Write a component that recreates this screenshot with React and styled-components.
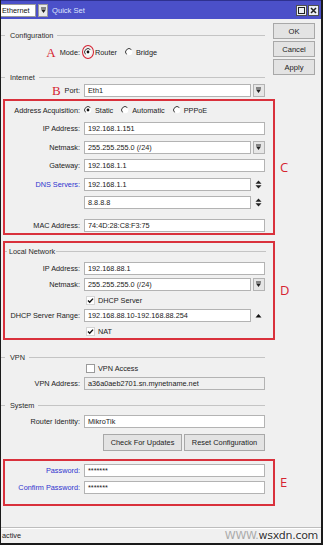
import React from 'react';
import styled, { createGlobalStyle } from 'styled-components';

const GlobalStyle = createGlobalStyle`
    html, body {
        margin: 0;
        padding: 0;
        background: #fff;
    }
`

const Window = styled.div`
    position: relative;
    width: 323px;
    height: 545px;
    box-sizing: border-box;
    border-left: 1px solid #1a1a1a;
    border-right: 2px solid #1a1a1a;
    border-bottom: 2px solid #1a1a1a;
    background: #f0f0f0;
    display: flex;
    flex-direction: column;
    font-family: "Liberation Sans", Arial, sans-serif;
    font-size: 7.3px;
    color: #222;
    overflow: hidden;
`

const TitleBar = styled.div`
    height: 19px;
    box-sizing: border-box;
    border-top: 1px solid #2e3190;
    background: #4b50c9;
    display: flex;
    align-items: center;
    flex: none;
`

const ModeSelect = styled.div`
    width: 36px;
    height: 13px;
    background: #fff;
    border: 1px solid #9a9a9a;
    box-sizing: border-box;
    line-height: 11px;
    padding-left: 1px;
    margin-left: -1px;
    color: #111;
`

const TitleDrop = styled.div`
    width: 10px;
    height: 13px;
    margin-left: 2px;
    box-sizing: border-box;
    background: #e9e9e9;
    border: 1px solid #9a9a9a;
    display: flex;
    align-items: center;
    justify-content: center;
`

const TitleText = styled.div`
    margin-left: 4px;
    color: #dce4ff;
    font-size: 7.6px;
    flex: 1;
`

const WinButtons = styled.div`
    display: flex;
    gap: 1px;
    margin-right: 2px;
`

const WinButton = styled.div`
    width: 11px;
    height: 11px;
    box-sizing: border-box;
    background: #eceff5;
    border: 1px solid #505050;
    display: flex;
    align-items: center;
    justify-content: center;
`

const Body = styled.div`
    flex: 1;
    display: flex;
    flex-direction: column;
    padding-top: 4px;
`

const SectionRow = styled.div`
    display: flex;
    align-items: ${p => p.$top ? 'flex-start' : 'center'};
    margin-top: ${p => p.$mt || 0}px;
`

const Main = styled.div`
    width: 271px;
    flex: none;
    display: flex;
    flex-direction: column;
`

const Aside = styled.div`
    flex: 1;
    display: flex;
    flex-direction: column;
    gap: 2px;
    padding-left: ${p => p.$pl ?? 1}px;
`

const Box = styled.div`
    width: 272px;
    margin-left: 2px;
    box-sizing: border-box;
    border: 2px solid #d9313c;
    flex: none;
    display: flex;
    flex-direction: column;
    padding: ${p => p.$pt || 0}px 0 ${p => p.$pb || 0}px;
`

const Marker = styled.div`
    color: #d62430;
    font-family: ${p => p.$serif ? '"Liberation Serif", serif' : '"Open Sans", "Liberation Sans", sans-serif'};
    font-size: ${p => p.$size || 13}px;
    line-height: 1;
    padding-left: 5px;
    margin-right: ${p => p.$mr || 0}px;
`

const SideButton = styled.div`
    width: 42px;
    height: 16px;
    box-sizing: border-box;
    background: #e3e3e3;
    border: 1px solid #a8a8a8;
    display: flex;
    align-items: center;
    justify-content: center;
    font-size: 7.6px;
    color: #222;
`

const GroupHeader = styled.div`
    display: flex;
    align-items: center;
    height: 10px;
    gap: ${p => p.$gap ?? 5}px;
    padding-right: 7px;
    margin-top: ${p => p.$mt || 0}px;
    color: #2a2a2a;
    &::before {
        content: "";
        width: ${p => p.$dash ?? 4}px;
        border-top: 1px solid #c4c4c4;
    }
    &::after {
        content: "";
        flex: 1;
        border-top: 1px solid #c4c4c4;
        margin-left: -1px;
    }
`

const Row = styled.div`
    display: flex;
    align-items: center;
    height: ${p => p.$h || 14}px;
    margin-top: ${p => p.$mt || 0}px;
    padding-right: ${p => p.$pr ?? 7}px;
`

const Label = styled.div`
    width: ${p => p.$w}px;
    flex: none;
    display: flex;
    justify-content: flex-end;
    align-items: center;
    margin-right: 4px;
    white-space: nowrap;
    color: ${p => p.$blue ? '#2f33cf' : '#222'};
`

const Input = styled.div`
    flex: 1;
    height: 13px;
    box-sizing: border-box;
    border: 1px solid #b3b3b3;
    background: ${p => p.$disabled ? '#f0f0f0' : '#fff'};
    padding-left: 3px;
    line-height: 11px;
    color: #1a1a1a;
    white-space: nowrap;
    overflow: hidden;
`

const Trail = styled.div`
    width: 13px;
    flex: none;
    margin-left: 1px;
    height: 13px;
    display: flex;
    align-items: center;
    justify-content: center;
`

const DropButton = styled.div`
    width: 12px;
    height: 13px;
    box-sizing: border-box;
    background: #e6e6e6;
    border: 1px solid #b3b3b3;
    display: flex;
    align-items: center;
    justify-content: center;
`

const Options = styled.div`
    display: flex;
    align-items: center;
    gap: 8px;
`

const Option = styled.div`
    position: relative;
    display: flex;
    align-items: center;
    gap: 3px;
    margin-left: ${p => p.$ml || 0}px;
    white-space: nowrap;
`

const Ring = styled.div`
    position: absolute;
    left: -2px;
    top: -3px;
    width: 12px;
    height: 14px;
    box-sizing: border-box;
    border: 1.5px solid #d42030;
    border-radius: 50%;
`

const ButtonBar = styled.div`
    display: flex;
    justify-content: flex-end;
    gap: 2px;
    padding-right: 7px;
    margin-top: 5px;
`

const PushButton = styled.div`
    width: ${p => p.$w}px;
    height: 17px;
    box-sizing: border-box;
    background: #e3e3e3;
    border: 1px solid #a8a8a8;
    display: flex;
    align-items: center;
    justify-content: center;
    font-size: 7.4px;
`

const StatusBar = styled.div`
    height: 16px;
    box-sizing: border-box;
    border-top: 1px solid #bdbdbd;
    box-shadow: inset 0 1px 0 #fff;
    display: flex;
    align-items: center;
    justify-content: space-between;
    padding-left: 1px;
    padding-right: 3px;
    flex: none;
`

const Watermark = styled.div`
    font-family: "DejaVu Sans", sans-serif;
    font-size: 11px;
    letter-spacing: -0.3px;
    color: #aaa;
    span {
        color: #333;
        text-shadow: 0 0 2px #fff, 0 0 2px #fff;
    }
`

function Radio({ on }) {
    return (
        <svg width="8" height="8" viewBox="0 0 8 8">
            <circle cx="4" cy="4" r="3.3" fill="#fff" />
            <path d="M6.4 1.6 A3.3 3.3 0 0 0 1.6 6.4" stroke="#3a3a3a" strokeWidth="1" fill="none" />
            {on && <circle cx="4" cy="4" r="1.4" fill="#111" />}
        </svg>
    )
}

function Check({ on }) {
    return (
        <svg width="9" height="9" viewBox="0 0 9 9">
            <rect x="0.5" y="0.5" width="8" height="8" fill="#fff" stroke={on ? '#d4d4d4' : '#9a9a9a'} />
            {on && <path d="M2 4.6 L3.7 6.3 L7 2.6" stroke="#111" strokeWidth="1.4" fill="none" />}
        </svg>
    )
}

function DropGlyph() {
    return (
        <svg width="7" height="7" viewBox="0 0 7 7">
            <rect x="1" y="0.5" width="5" height="1" fill="#222" />
            <path d="M1 2.5 H6 L3.5 6 Z" fill="#222" />
        </svg>
    )
}

function Spin() {
    return (
        <svg width="7" height="9" viewBox="0 0 7 9">
            <path d="M0.5 3.8 H6.5 L3.5 0.5 Z" fill="#222" />
            <path d="M0.5 5.2 H6.5 L3.5 8.5 Z" fill="#222" />
        </svg>
    )
}

function Up() {
    return (
        <svg width="7" height="5" viewBox="0 0 7 5">
            <path d="M0.5 4.5 H6.5 L3.5 1 Z" fill="#111" />
        </svg>
    )
}

function Field({ label, value, w = 79, blue, trail, disabled, mt, pr }) {
    return (
        <Row $mt={mt} $pr={pr}>
            <Label $w={w} $blue={blue}>{label}</Label>
            <Input $disabled={disabled}>{value}</Input>
            {trail === 'drop' && <Trail><DropButton><DropGlyph /></DropButton></Trail>}
            {trail === 'spin' && <Trail><Spin /></Trail>}
            {trail === 'up' && <Trail><Up /></Trail>}
        </Row>
    )
}

function CheckRow({ label, on, w = 79, mt, pr }) {
    return (
        <Row $h={12} $mt={mt} $pr={pr}>
            <Label $w={w} />
            <Option $ml={2}><Check on={on} />{label}</Option>
        </Row>
    )
}

export default function App() {
    return (
        <Window>
            <GlobalStyle />
            <TitleBar>
                <ModeSelect>Ethernet</ModeSelect>
                <TitleDrop><DropGlyph /></TitleDrop>
                <TitleText>Quick Set</TitleText>
                <WinButtons>
                    <WinButton>
                        <svg width="7" height="7" viewBox="0 0 7 7"><rect x="0.5" y="0.5" width="6" height="6" fill="none" stroke="#222" /></svg>
                    </WinButton>
                    <WinButton>
                        <svg width="7" height="7" viewBox="0 0 7 7"><path d="M1 1 L6 6 M6 1 L1 6" stroke="#222" strokeWidth="1.5" /></svg>
                    </WinButton>
                </WinButtons>
            </TitleBar>

            <Body>
                <SectionRow $top>
                    <Main>
                        <GroupHeader $mt={7}>Configuration</GroupHeader>
                        <Row $mt={5}>
                            <Label $w={79}><Marker $serif $size={13} $mr={4}>A</Marker>Mode:</Label>
                            <Options>
                                <Option><Radio on /><Ring />Router</Option>
                                <Option><Radio />Bridge</Option>
                            </Options>
                        </Row>
                        <GroupHeader $mt={13}>Internet</GroupHeader>
                        <Row $mt={1}>
                            <Label $w={79}><Marker $serif $size={13} $mr={4}>B</Marker>Port:</Label>
                            <Input>Eth1</Input>
                            <Trail><DropButton><DropGlyph /></DropButton></Trail>
                        </Row>
                    </Main>
                    <Aside>
                        <SideButton>OK</SideButton>
                        <SideButton>Cancel</SideButton>
                        <SideButton>Apply</SideButton>
                    </Aside>
                </SectionRow>

                <SectionRow $mt={2}>
                    <Box $pt={2} $pb={1}>
                        <Row $pr={8}>
                            <Label $w={75}>Address Acquisition:</Label>
                            <Options>
                                <Option><Radio on />Static</Option>
                                <Option><Radio />Automatic</Option>
                                <Option><Radio />PPPoE</Option>
                            </Options>
                        </Row>
                        <Field w={75} pr={8} mt={4.5} label="IP Address:" value="192.168.1.151" />
                        <Field w={75} pr={8} mt={4.5} label="Netmask:" value="255.255.255.0 (/24)" trail="drop" />
                        <Field w={75} pr={8} mt={4.5} label="Gateway:" value="192.168.1.1" />
                        <Field w={75} pr={8} mt={4.5} label="DNS Servers:" value="192.168.1.1" trail="spin" blue />
                        <Field w={75} pr={8} mt={4.5} label="" value="8.8.8.8" trail="spin" />
                        <Field w={75} pr={8} mt={8.5} label="MAC Address:" value="74:4D:28:C8:F3:75" />
                    </Box>
                    <Marker>C</Marker>
                </SectionRow>

                <SectionRow $mt={6}>
                    <Box $pt={3}>
                        <GroupHeader $dash={2} $gap={2}>Local Network</GroupHeader>
                        <Field w={75} pr={8} mt={5} label="IP Address:" value="192.168.88.1" />
                        <Field w={75} pr={8} mt={2.5} label="Netmask:" value="255.255.255.0 (/24)" trail="drop" />
                        <CheckRow w={75} pr={8} mt={3} label="DHCP Server" on />
                        <Field w={75} pr={8} mt={2} label="DHCP Server Range:" value="192.168.88.10-192.168.88.254" trail="up" />
                        <CheckRow w={75} pr={8} mt={3} label="NAT" on />
                    </Box>
                    <Marker>D</Marker>
                </SectionRow>

                <Main>
                    <GroupHeader $mt={13}>VPN</GroupHeader>
                    <CheckRow label="VPN Access" />
                    <Field mt={2} label="VPN Address:" value="a36a0aeb2701.sn.mynetname.net" disabled />
                    <GroupHeader $mt={10}>System</GroupHeader>
                    <Field mt={4} label="Router Identity:" value="MikroTik" />
                    <ButtonBar>
                        <PushButton $w={79}>Check For Updates</PushButton>
                        <PushButton $w={81}>Reset Configuration</PushButton>
                    </ButtonBar>
                </Main>

                <SectionRow $mt={8}>
                    <Box $pt={3} $pb={9}>
                        <Field w={75} pr={8} label="Password:" value="*******" blue />
                        <Field w={75} pr={8} mt={3} label="Confirm Password:" value="*******" blue />
                    </Box>
                    <Marker>E</Marker>
                </SectionRow>
            </Body>

            <StatusBar>
                <div>active</div>
                <Watermark>WWW.<span>wsxdn.com</span></Watermark>
            </StatusBar>
        </Window>
    )
}
